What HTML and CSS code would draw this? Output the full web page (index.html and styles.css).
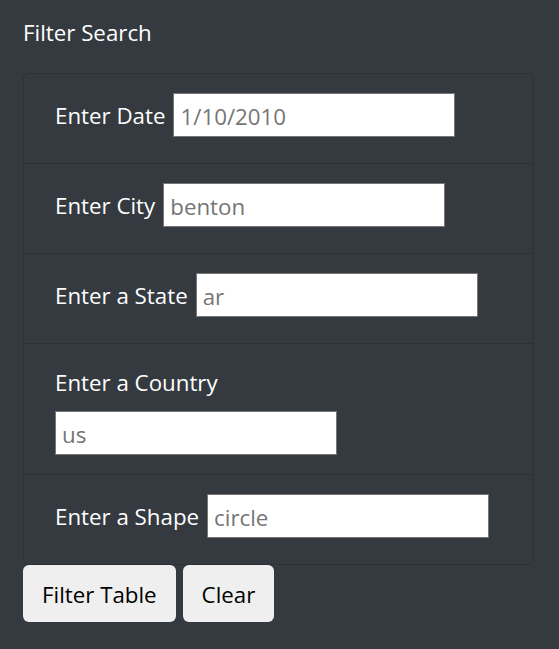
FILE: index.html
```html
<!DOCTYPE html>
<html>
<head>
<meta charset="utf-8">
<link rel="stylesheet" href="styles.css">
</head>
<body>
<div class="page">
  <div class="title">Filter Search</div>
  <ul class="list">
    <li class="item"><label class="lbl" for="d">Enter Date</label><input class="field" id="d" type="text" placeholder="1/10/2010"></li>
    <li class="item"><label class="lbl" for="c">Enter City</label><input class="field" id="c" type="text" placeholder="benton"></li>
    <li class="item"><label class="lbl" for="s">Enter a State</label><input class="field" id="s" type="text" placeholder="ar"></li>
    <li class="item item-stack"><label class="lbl" for="co">Enter a Country</label><input class="field" id="co" type="text" placeholder="us"></li>
    <li class="item"><label class="lbl" for="sh">Enter a Shape</label><input class="field" id="sh" type="text" placeholder="circle"></li>
  </ul>
  <div class="actions">
    <button class="btn" type="button">Filter Table</button>
    <button class="btn" type="button">Clear</button>
  </div>
</div>
</body>
</html>
```
FILE: styles.css
```css
html, body {
  margin: 0;
  padding: 0;
  background: #343a40;
}
body {
  font-family: "Open Sans", "Noto Sans", sans-serif;
  font-size: 22.3px;
  line-height: 36px;
  color: #ffffff;
}
.page {
  padding: 15px 25px 0 23px;
}
.title {
  height: 36px;
  margin-bottom: 22px;
}
.list {
  list-style: none;
  margin: 0;
  padding: 0;
  border: 1px solid #2c3136;
  border-radius: 5px;
}
.item {
  display: flex;
  align-items: center;
  gap: 8px;
  padding: 19px 31px 26px 31px;
  border-top: 1px solid #2c3136;
}
.item:first-child {
  border-top: none;
}
.item-stack {
  display: block;
  padding: 19px 31px 19px 31px;
}
.item-stack .lbl {
  display: block;
  margin-bottom: 10px;
}
.lbl {
  white-space: nowrap;
  padding-top: 2px;
}
.field {
  box-sizing: border-box;
  width: 282px;
  height: 44px;
  margin: 0;
  padding: 2px 6px 0;
  border: 1px solid #767676;
  border-radius: 0;
  background: #ffffff;
  font-family: inherit;
  font-size: 22.3px;
  color: #212529;
  outline: none;
}
.field::placeholder {
  color: #757575;
  opacity: 1;
}
.actions {
  display: flex;
  gap: 7px;
}
.btn {
  height: 57px;
  padding: 2px 19px 0;
  border: none;
  border-radius: 6px;
  background: #efefef;
  color: #000000;
  font-family: inherit;
  font-size: 22.3px;
  cursor: pointer;
}
```
